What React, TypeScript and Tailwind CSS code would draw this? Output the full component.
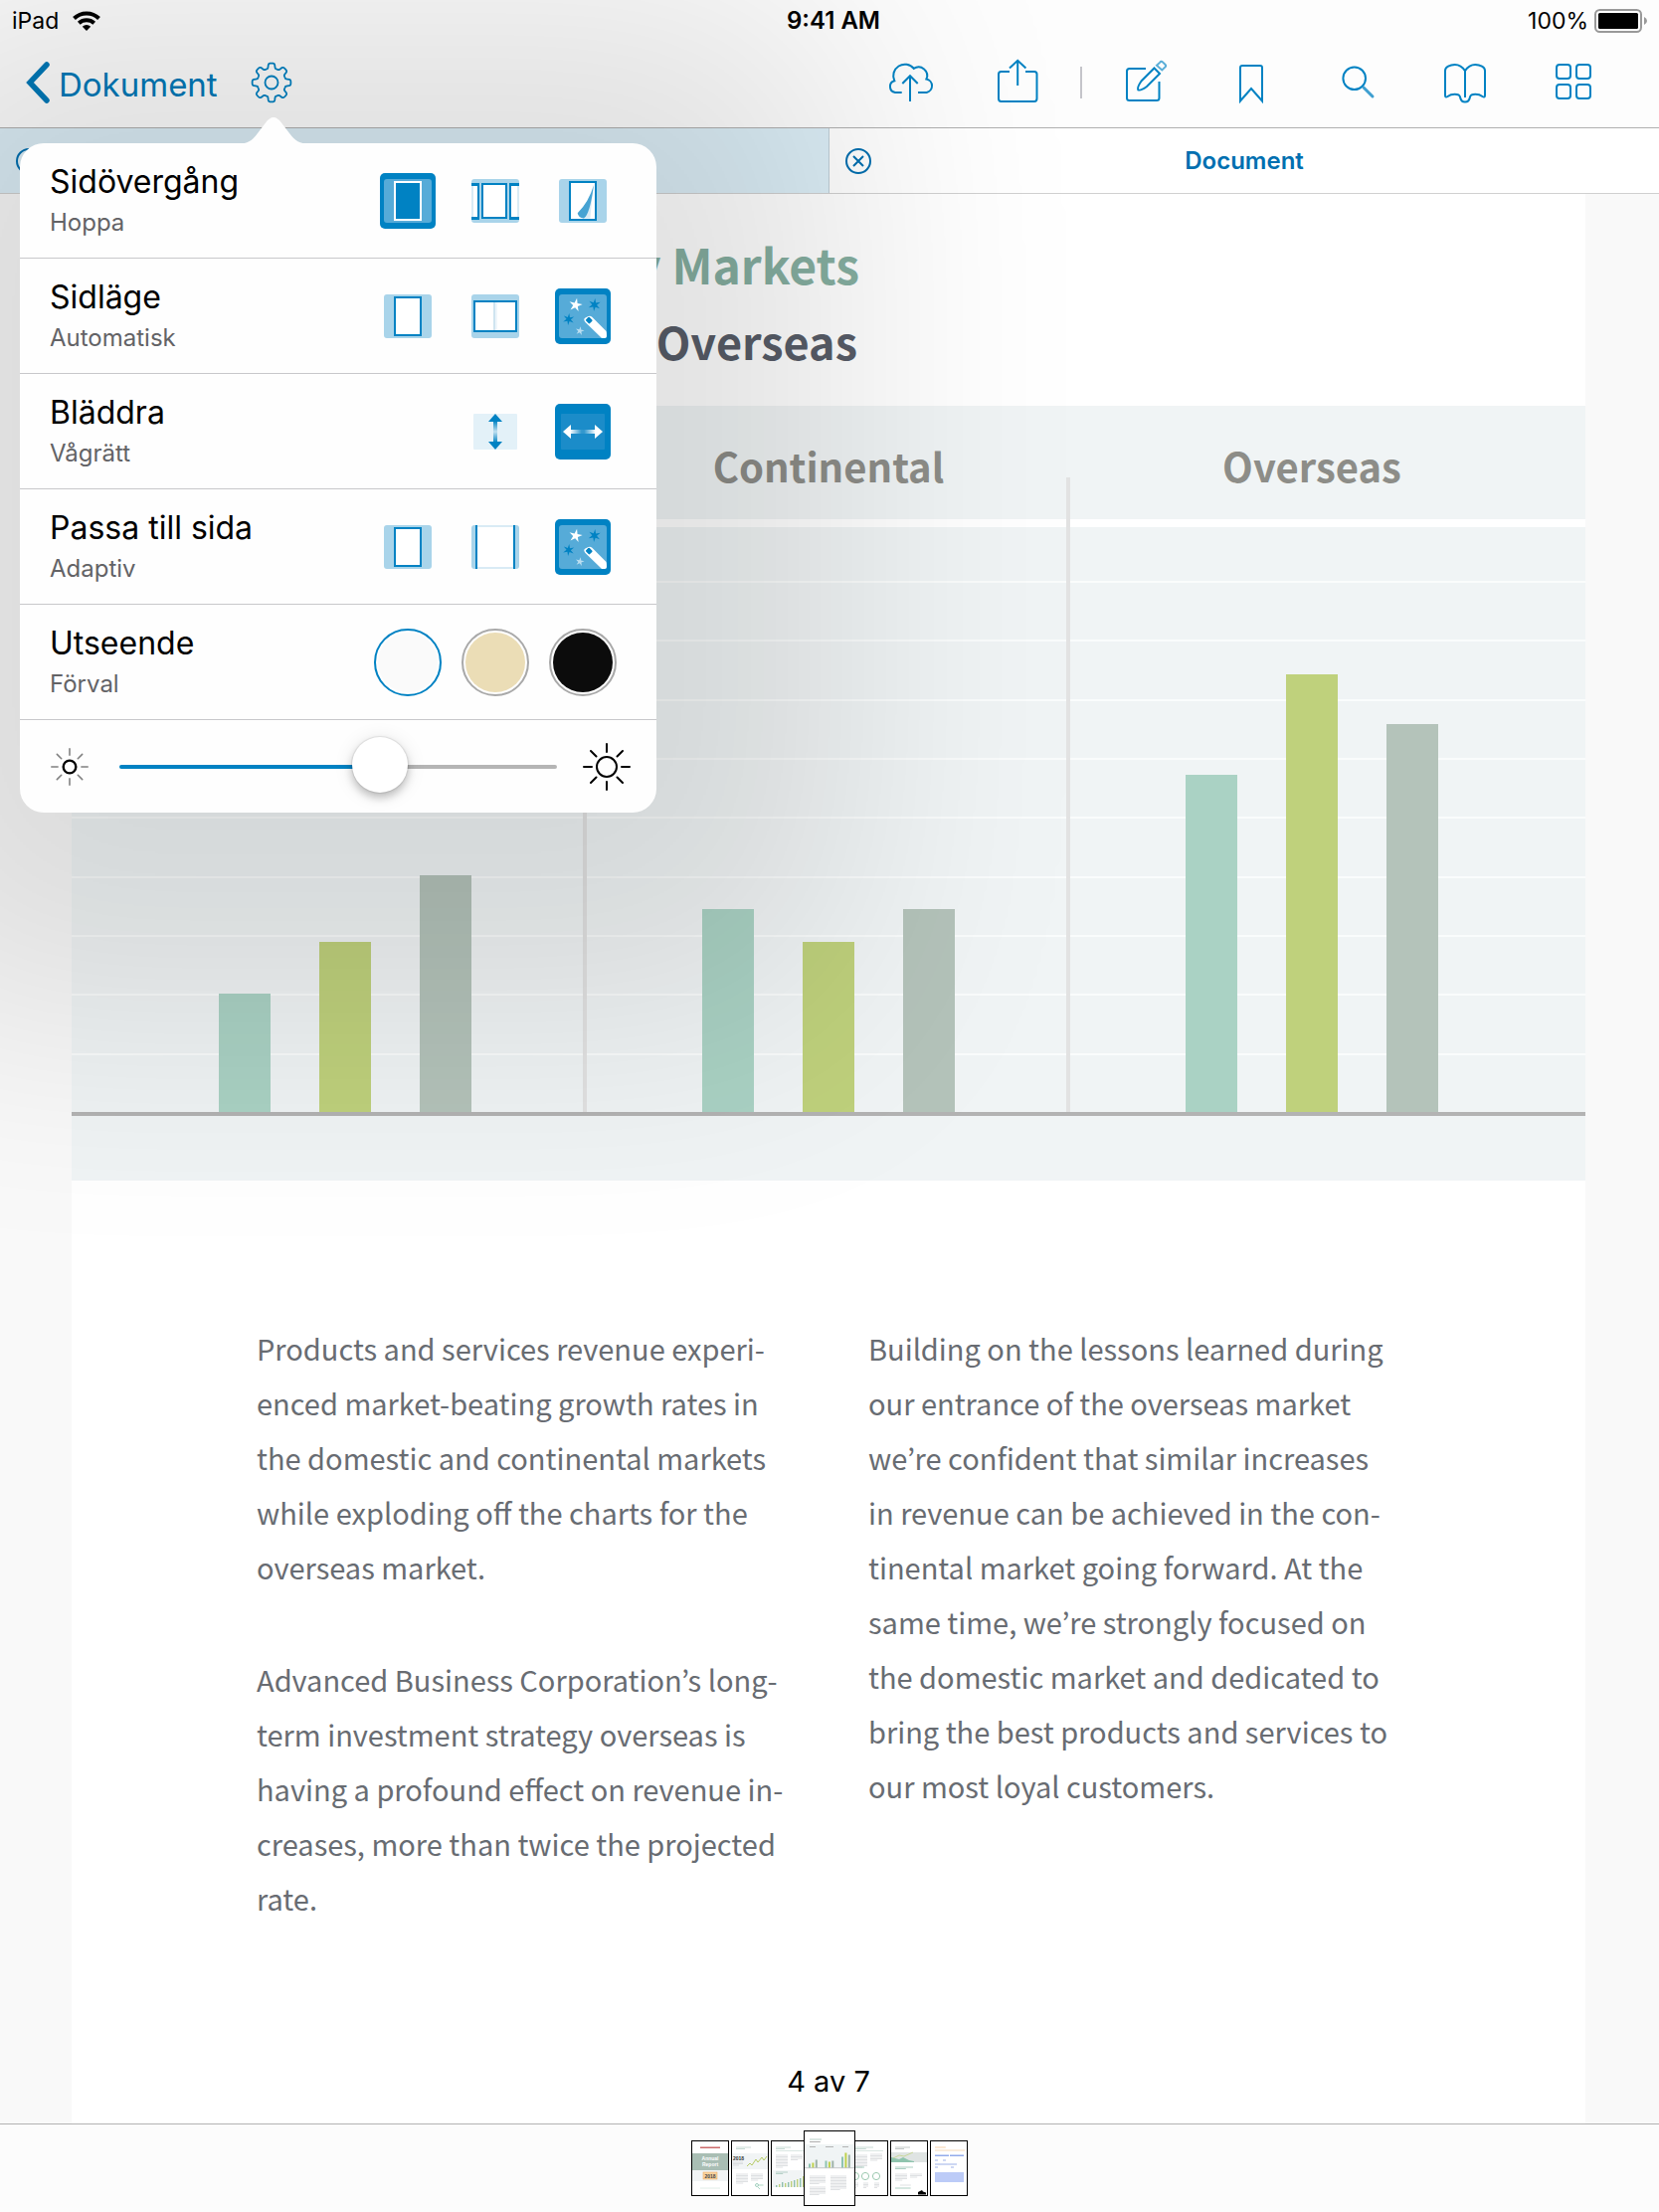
import type { ReactNode } from "react";

const BLUE = "#0082c3";

const gearPath = (() => {
  const points: string[] = [];
  for (let i = 0; i < 240; i++) {
    const t = (i / 240) * Math.PI * 2;
    const r = 16.9 + 2.5 * Math.tanh(2.6 * Math.cos(8 * t) + 0.1);
    points.push(`${(24 + r * Math.sin(t)).toFixed(2)} ${(24 - r * Math.cos(t)).toFixed(2)}`);
  }
  return `M${points.join("L")}Z`;
})();

const starPath = (cx: number, cy: number, r: number, spikes: number, turn: number) => {
  const pts: string[] = [];
  for (let i = 0; i < spikes * 2; i++) {
    const a = (i / (spikes * 2)) * Math.PI * 2 + turn;
    const q = i % 2 ? r * 0.36 : r;
    pts.push(`${(cx + q * Math.sin(a)).toFixed(2)} ${(cy - q * Math.cos(a)).toFixed(2)}`);
  }
  return `M${pts.join("L")}Z`;
};

function LineIcon({ children }: { children: ReactNode }) {
  return (
    <svg viewBox="0 0 48 48" className="size-12" fill="none" stroke={BLUE} strokeWidth="2" aria-hidden="true">
      {children}
    </svg>
  );
}

const toolbarStart = [
  {
    label: "Ladda upp",
    icon: (
      <>
        <path d="M14.7 34H8A6 6 0 0 1 7.3 22.3A11.6 11.6 0 0 1 26.7 9.9A8.6 8.6 0 0 1 39.4 20.5A6.9 6.9 0 0 1 39.7 34H31" />
        <path d="M23 43V17M15.3 25L23 17.2L30.7 25" />
      </>
    ),
  },
  {
    label: "Dela",
    icon: (
      <>
        <path d="M15 13H6.5Q4 13 4 15.5V40Q4 43 6.5 43H40Q42.5 43 42.5 40V15.5Q42.5 13 40 13H31" />
        <path d="M23.2 27V2M15 9.5L23.2 1.8L31.4 9.5" />
      </>
    ),
  },
];

const toolbarEnd = [
  {
    label: "Redigera",
    icon: (
      <>
        <path d="M26 10H9.5Q7 10 7 12.5V39.500Q7 42 9.500 42H37Q39.500 42 39.500 39.500V23" />
        <path d="M34.500 9.500L40 15L27 28Q21 32.500 18.300 31.400Q17 29 21.500 22.500Z" />
        <path d="M40.300 3.600Q41.500 2 43 3.400L45.600 6Q46.700 7.200 45.500 8.400L42.300 11.500L37 6.800Z" stroke="#5aaed8" />
      </>
    ),
  },
  {
    label: "Bokmärke",
    icon: <path d="M13 42.500V9Q13 7 15 7H33Q35 7 35 9V42.500L24 30Z" />,
  },
  {
    label: "Sök",
    icon: (
      <>
        <circle cx="19.700" cy="19.700" r="11.300" />
        <path d="M29 29L38 38" stroke="#3f9fd0" strokeWidth="3" strokeLinecap="round" />
      </>
    ),
  },
  {
    label: "Läsläge",
    icon: (
      <path d="M23 39V12.300C20 7.500 16 6 12.700 6C8 6 3 8.500 3 12V37C3 39 4.300 38.800 5.500 38C7.500 36.500 10 35.800 12.700 35.800C15.500 35.800 17.500 36.500 18 38.500C18.500 41.500 20 43.500 23 43.500C26 43.500 27.500 41.500 28 38.500C28.500 36.500 30.500 35.800 33.300 35.800C36 35.800 38.500 36.500 40.500 38C41.700 38.800 43 39 43 37V12C43 8.500 38 6 33.300 6C30 6 26 7.500 23 12.300" />
    ),
  },
  {
    label: "Miniatyrer",
    icon: (
      <>
        <rect x="7" y="6" width="14" height="14" rx="3" />
        <rect x="27" y="6" width="14" height="14" rx="3" />
        <rect x="7" y="26" width="14" height="14" rx="3" />
        <rect x="27" y="26" width="14" height="14" rx="3" />
      </>
    ),
  },
];

function ToolButton({ label, icon }: { label: string; icon: ReactNode }) {
  return (
    <button type="button" aria-label={label} className="flex w-[108px] justify-center">
      <LineIcon>{icon}</LineIcon>
    </button>
  );
}

function StatusBar() {
  return (
    <div className="grid h-10 grid-cols-3 items-end px-3 pb-[5px] text-[23px] leading-7 text-black">
      <div className="flex items-center gap-[14px]">
        <span>iPad</span>
        <svg viewBox="0 0 28 20" className="h-5 w-7" fill="none" stroke="#000" strokeWidth="4" aria-hidden="true">
          <path d="M1.500 7.500A18 18 0 0 1 26.500 7.500" />
          <path d="M6.300 12.300A11.500 11.500 0 0 1 21.700 12.300" />
          <path d="M9.800 15.800A6 6 0 0 1 18.200 15.800L14 20Z" fill="#000" stroke="none" />
        </svg>
      </div>
      <div className="pl-2 text-center text-[24px] font-semibold">9:41 AM</div>
      <div className="flex items-center justify-end gap-[6px]">
        <span>100%</span>
        <svg viewBox="0 0 53 24" className="h-6 w-[53px]" aria-hidden="true">
          <rect x="1" y="1" width="46" height="22" rx="4.500" fill="#fff" stroke="#999" strokeWidth="2" />
          <rect x="4" y="4" width="40" height="16" rx="1.500" fill="#000" />
          <path d="M50 8Q53 9.500 53 12T50 16Z" fill="#999" />
        </svg>
      </div>
    </div>
  );
}

function NavBar() {
  return (
    <div className="flex h-[88px] items-center pb-[2px] pr-8">
      <button type="button" className="flex items-center gap-2 pl-[25px] text-[33px] leading-10 text-[#0079b8]">
        <svg viewBox="0 0 26 44" className="h-11 w-[26px]" fill="none" stroke="#0079b8" strokeWidth="5.500" strokeLinecap="round" strokeLinejoin="miter" aria-hidden="true">
          <path d="M22 4L5 22L22 40" />
        </svg>
        <span className="pt-[3px]">Dokument</span>
      </button>
      <button type="button" aria-label="Inställningar" className="ml-[30px]">
        <svg viewBox="0 0 48 48" className="size-12" fill="none" stroke={BLUE} strokeWidth="1.800" aria-hidden="true">
          <path d={gearPath} />
          <circle cx="24" cy="24" r="6.500" />
        </svg>
      </button>
      <div className="ml-auto flex items-center">
        {toolbarStart.map((t) => (
          <ToolButton key={t.label} {...t} />
        ))}
        <div className="flex w-[18px] justify-center">
          <div className="h-8 w-[2px] bg-[#c4c4ca]" />
        </div>
        {toolbarEnd.map((t) => (
          <ToolButton key={t.label} {...t} />
        ))}
      </div>
    </div>
  );
}

function CloseButton() {
  return (
    <button type="button" aria-label="Stäng flik" className="shrink-0">
      <svg viewBox="0 0 26 26" className="size-[26px]" fill="none" stroke="#006fb0" strokeWidth="2" aria-hidden="true">
        <circle cx="13" cy="13" r="12" />
        <path d="M8 8L18 18M18 8L8 18" />
      </svg>
    </button>
  );
}

function Tabs() {
  return (
    <div className="grid h-[66px] grid-cols-2 border-b border-[#d0d0d0]">
      <div className="flex items-center border-r border-[#c0ced6] bg-[#dceef7] px-4">
        <CloseButton />
      </div>
      <div className="flex items-center bg-white px-4">
        <CloseButton />
        <button type="button" className="flex-1 pr-[26px] text-center text-[24px] font-semibold leading-8 text-[#006fb0]">
          Document
        </button>
      </div>
    </div>
  );
}

const groups = [
  { name: "Domestic", bars: [119, 171, 238] },
  { name: "Continental", bars: [204, 171, 204] },
  { name: "Overseas", bars: [339, 440, 390] },
];

const barColors = ["bg-[#aad2c4]", "bg-[#bfd17c]", "bg-[#b4c3ba]"];

function Chart() {
  return (
    <div className="bg-[#f0f4f5] pb-[65px]">
      <div className="grid border-b-4 border-[#b3b3b3]">
        <div className="col-start-1 row-start-1 flex flex-col pt-[114px]">
          <div className="h-2 bg-white" />
          <div className="flex h-[588px] flex-col">
            <div className="h-14 border-b-2 border-[#fafcfc]" />
            {Array.from({ length: 8 }, (_, i) => (
              <div key={i} className="flex-1 border-b-2 border-[#fafcfc]" />
            ))}
            <div className="flex-1" />
          </div>
        </div>
        <div className="z-0 col-start-1 row-start-1 grid grid-cols-3 px-8">
          {groups.map((g, gi) => (
            <div key={g.name} className="relative flex flex-col">
              <h3 className="pt-[34px] text-center text-[40px] font-semibold leading-[52px] text-[#8d8d88]">{g.name}</h3>
              <div className="flex flex-1 items-end justify-center gap-[49px]">
                {g.bars.map((h, i) => (
                  <div key={i} className={`w-[52px] ${barColors[i]}`} style={{ height: h }} />
                ))}
              </div>
              {gi < 2 && <div className="absolute bottom-0 right-0 h-[638px] w-1 bg-[#e2e2e2]" />}
            </div>
          ))}
        </div>
      </div>
    </div>
  );
}

const leftText = [
  [
    "Products and services revenue experi-",
    "enced market-beating growth rates in",
    "the domestic and continental markets",
    "while exploding off the charts for the",
    "overseas market.",
  ],
  [
    "Advanced Business Corporation’s long-",
    "term investment strategy overseas is",
    "having a profound effect on revenue in-",
    "creases, more than twice the projected",
    "rate.",
  ],
];

const rightText = [
  [
    "Building on the lessons learned during",
    "our entrance of the overseas market",
    "we’re confident that similar increases",
    "in revenue can be achieved in the con-",
    "tinental market going forward. At the",
    "same time, we’re strongly focused on",
    "the domestic market and dedicated to",
    "bring the best products and services to",
    "our most loyal customers.",
  ],
];

function Column({ paragraphs }: { paragraphs: string[][] }) {
  return (
    <div className="flex flex-col gap-[58px]">
      {paragraphs.map((lines) => (
        <p key={lines[0]} className="whitespace-nowrap">
          {lines.map((l) => (
            <span key={l} className="block">
              {l}
            </span>
          ))}
        </p>
      ))}
    </div>
  );
}

function DocumentPage() {
  return (
    <main className="flex flex-1 flex-col bg-[#f9f9f9] pl-[72px] pr-[74px]">
      <article lang="en" className="flex flex-1 flex-col bg-white font-['Noto_Sans_CJK_KR','Noto_Sans',sans-serif]">
        <header className="flex h-[213px] w-[792px] flex-col pt-[31px] text-right font-semibold">
          <h1 className="text-[48px] leading-[78px] text-[#86afa1]">Key Markets</h1>
          <h2 className="pr-[2px] text-[45px] leading-[78px] text-[#585d68]">Overseas</h2>
        </header>
        <Chart />
        <div className="grid grid-cols-2 gap-20 px-[186px] pt-[141px] text-[29px] leading-[55px] text-[#686c72]">
          <Column paragraphs={leftText} />
          <Column paragraphs={rightText} />
        </div>
        <div className="mt-auto pb-[22px] text-center font-[Inter,sans-serif] text-[29px] leading-10 text-black">4 av 7</div>
      </article>
    </main>
  );
}

function TextLines({ x, y, w, n, color = "#c9cdd0" }: { x: number; y: number; w: number; n: number; color?: string }) {
  return (
    <g stroke={color} strokeWidth="0.600">
      {Array.from({ length: n }, (_, i) => (
        <path key={i} d={`M${x} ${y + i * 1.5}h${i === n - 1 ? w * 0.6 : w}`} />
      ))}
    </g>
  );
}

const thumbs: ReactNode[] = [
  <>
    <rect x="8" y="5.500" width="20" height="1.500" fill="#cc6b6b" />
    <rect y="12" width="36" height="17" fill="#a9beb4" />
    <rect y="29" width="36" height="11" fill="#f1f4f5" />
    <text x="18" y="19" fontSize="5" fontWeight="700" textAnchor="middle" fill="#fff">Annual</text>
    <text x="18" y="25" fontSize="5" fontWeight="700" textAnchor="middle" fill="#fff">Report</text>
    <rect x="11" y="31" width="14" height="7" fill="#f9d3a0" stroke="#efa550" strokeWidth="0.500" />
    <text x="18" y="36.500" fontSize="5" fontWeight="700" textAnchor="middle" fill="#444">2018</text>
    <path d="M8 47h20" stroke="#dbe7e2" strokeWidth="0.800" />
  </>,
  <>
    <TextLines x={4} y={6} w={15} n={2} color="#a5c3b8" />
    <rect y="12" width="36" height="16" fill="#f1f4f5" />
    <text x="1" y="19" fontSize="5" fontWeight="700" fill="#333">2018</text>
    <TextLines x={1} y={21} w={10} n={3} />
    <path d="M15 25l3-3 2 2 4-6 2 3 4-5 2 3 3-4" fill="none" stroke="#b7cc66" strokeWidth="1" />
    <TextLines x={4} y={33} w={12} n={7} />
    <TextLines x={19} y={33} w={12} n={5} />
    <circle cx="25" cy="44" r="1.500" fill="none" stroke="#8cc5ae" strokeWidth="0.800" />
    <path d="M26.500 44h5M26 46l2 2" stroke="#8cc5ae" strokeWidth="0.700" />
  </>,
  <>
    <TextLines x={4} y={6} w={15} n={2} color="#a5c3b8" />
    <path d="M4 9.500h32" stroke="#b5cfc5" strokeWidth="0.500" />
    <TextLines x={4} y={14} w={12} n={9} />
    <TextLines x={19} y={14} w={12} n={4} />
    <rect y="29" width="36" height="17" fill="#f1f4f5" />
    <TextLines x={4} y={31} w={12} n={2} color="#8fb5a7" />
    {[2, 3, 5, 4, 5, 6, 7, 8, 9, 11, 12].map((h, i) => (
      <rect key={i} x={4 + i * 3} y={46 - h} width="1.400" height={h} fill={i % 2 ? "#bfd17c" : "#8fbfae"} />
    ))}
  </>,
  <>
    <TextLines x={5} y={8} w={20} n={1} color="#86afa1" />
    <TextLines x={5} y={10.5} w={18} n={1} color="#777" />
    <rect y="13" width="50" height="24" fill="#f0f4f5" />
    <path d="M5 15.500h6M21 15.500h8M38 15.500h6" stroke="#888" strokeWidth="0.600" />
    {[4, 5, 8, 7, 6, 7, 11, 15, 13].map((h, i) => (
      <rect key={i} x={4 + (i % 3) * 3.4 + Math.floor(i / 3) * 16.5} y={36.5 - h} width="2" height={h} fill={["#8fc4b2", "#bfd14c", "#9fb3a9"][i % 3]} />
    ))}
    <path d="M0 36.700h50" stroke="#aaa" strokeWidth="0.600" />
    <TextLines x={5} y={45} w={16} n={6} />
    <TextLines x={5} y={56} w={16} n={6} />
    <TextLines x={26} y={45} w={16} n={10} />
  </>,
  <>
    <TextLines x={4} y={6} w={18} n={2} color="#a5c3b8" />
    <path d="M0 9.500h32" stroke="#b5cfc5" strokeWidth="0.500" />
    <TextLines x={4} y={14} w={12} n={9} />
    <TextLines x={19} y={13} w={12} n={5} />
    <TextLines x={4} y={26} w={15} n={1} color="#77b09c" />
    {[4, 14, 25].map((x) => (
      <circle key={x} cx={x} cy="35" r="3.600" fill="none" stroke="#9cc9b0" strokeWidth="1" />
    ))}
    <TextLines x={2} y={42} w={5} n={4} />
    <TextLines x={12} y={42} w={5} n={4} />
    <TextLines x={23} y={42} w={5} n={4} />
  </>,
  <>
    <TextLines x={4} y={6} w={15} n={2} color="#9aa5a1" />
    <rect y="11" width="36" height="10" fill="#dfe4e3" />
    <path d="M0 21v-5l8 2 4-2 6 3 5 1v1z" fill="#8fc4ae" />
    <path d="M2 17l6-3 5 1 9-4" stroke="#b7cc66" strokeWidth="0.600" fill="none" />
    <TextLines x={4} y={26} w={18} n={2} color="#77b09c" />
    <TextLines x={4} y={33} w={12} n={5} />
    <TextLines x={19} y={33} w={12} n={3} />
    <TextLines x={9} y={44} w={18} n={1} />
    <TextLines x={4} y={47} w={26} n={1} color="#77b09c" />
    <path d="M27 51l4-2 1 1.500 3 1v2h-8z" fill="#000" />
  </>,
  <>
    <TextLines x={4} y={6} w={18} n={1} color="#f0b26b" />
    <path d="M4 9h30" stroke="#efbf86" strokeWidth="0.600" />
    <rect x="4" y="13.500" width="14" height="1.500" fill="#93abeb" />
    <rect x="19" y="13.500" width="14" height="1.500" fill="#93abeb" />
    <path d="M4 19h3M12 19h3M4 23h22M4 26h3M20 26h3" stroke="#9db1e8" strokeWidth="1" />
    <rect x="4" y="31" width="29" height="10" fill="#bccbf7" />
  </>,
];

function ThumbnailBar() {
  return (
    <footer className="flex h-[89px] items-center justify-center gap-[2px] border-t border-[#b2b2b2] bg-[#fcfcfc]">
      {thumbs.map((art, i) =>
        i === 3 ? (
          <button key={i} type="button" aria-label={`Sida ${i + 1}`} aria-current="page" className="z-10 mx-[-7px] h-[76px] w-[52px] border border-black bg-white">
            <svg viewBox="0 0 50 74" className="h-full w-full">{art}</svg>
          </button>
        ) : (
          <button key={i} type="button" aria-label={`Sida ${i + 1}`} className="h-14 w-[38px] border border-black bg-white">
            <svg viewBox="0 0 36 54" className="h-full w-full font-['Liberation_Sans',sans-serif]">{art}</svg>
          </button>
        )
      )}
    </footer>
  );
}

const Plain = () => <rect x="4" y="6" width="48" height="44" rx="3" fill="#a9d4ea" />;

const Selected = () => (
  <>
    <rect width="56" height="56" rx="5" fill={BLUE} />
    <rect x="4" y="6" width="48" height="44" rx="3" fill="#56abd8" />
  </>
);

const singlePage = (
  <>
    <Plain />
    <rect x="15" y="9" width="26" height="38" fill="#fff" stroke={BLUE} strokeWidth="2" />
  </>
);

const wand = (
  <>
    <Selected />
    <path d={starPath(20.7, 16.7, 7, 5, 0.2)} fill="#fff" />
    <path d={starPath(39.7, 16.5, 6.5, 6, 0.1)} fill={BLUE} />
    <path d={starPath(13.7, 31, 6, 6, 0.1)} fill={BLUE} />
    <path d={starPath(25, 42.7, 4.6, 5, 0.2)} fill="#bcdef0" />
    <path d="M32.500 28.500Q35 26.700 37.300 28.800L51.500 43Q52 44 52 48Q52 50 50 50H47L30.500 34Q28 31 30.500 29.500Z" fill="#fff" />
    <rect x="31.500" y="29.500" width="5.500" height="5" rx="1" transform="rotate(45 34.200 32)" fill={BLUE} />
  </>
);

type Option = { label: string; art: ReactNode; on?: boolean };
type Row = { title: string; value: string; options: Option[] };

const rows: Row[] = [
  {
    title: "Sidövergång",
    value: "Hoppa",
    options: [
      {
        label: "Hoppa",
        on: true,
        art: (
          <>
            <Selected />
            <rect x="15" y="9" width="26" height="38" fill={BLUE} stroke="#fff" strokeWidth="2" />
          </>
        ),
      },
      {
        label: "Rulla",
        art: (
          <>
            <Plain />
            <path d="M4 10h8v37H4zM42 10h10v37H42z" fill={BLUE} />
            <path d="M4 13h6v31H4zM44 13h8v31H44z" fill="#fff" />
            <path d="M4 13h2v31H4zM50 13h2v31H50z" fill="#d9ebf5" />
            <rect x="15" y="11" width="24" height="34" fill="#fff" stroke={BLUE} strokeWidth="2" />
          </>
        ),
      },
      {
        label: "Bläddra sida",
        art: (
          <>
            {singlePage}
            <path d="M39 12Q36 36 35.500 45.500H28L33 38Z" fill="#d9ebf5" />
            <path d="M39 12Q34 29 22.700 40.300Q23.500 45 29 45.500Q35 42 39 12Z" fill="#46a3d3" />
          </>
        ),
      },
    ],
  },
  {
    title: "Sidläge",
    value: "Automatisk",
    options: [
      { label: "Enkel", art: singlePage },
      {
        label: "Dubbel",
        art: (
          <>
            <Plain />
            <rect x="7" y="13" width="42" height="30" fill="#fff" stroke={BLUE} strokeWidth="2" />
            <path d="M26 14h2v28h-2z" fill="#cfe4f0" />
            <path d="M28 14h2v28h-2z" fill="#eff6fb" />
          </>
        ),
      },
      { label: "Automatisk", on: true, art: wand },
    ],
  },
  {
    title: "Bläddra",
    value: "Vågrätt",
    options: [
      {
        label: "Lodrätt",
        art: (
          <>
            <linearGradient id="vfade" x1="0" y1="0" x2="0" y2="1">
              <stop offset="0" stopColor={BLUE} />
              <stop offset="0.5" stopColor={BLUE} stopOpacity="0.15" />
              <stop offset="1" stopColor={BLUE} />
            </linearGradient>
            <rect x="6" y="10" width="44" height="36" rx="1" fill="#e3f1f8" />
            <rect x="26" y="17" width="4" height="22" fill="url(#vfade)" />
            <path d="M28 10l7 8H21zM28 46l7-8H21z" fill={BLUE} />
          </>
        ),
      },
      {
        label: "Vågrätt",
        on: true,
        art: (
          <>
            <linearGradient id="hfade" x1="0" y1="0" x2="1" y2="0">
              <stop offset="0" stopColor="#fff" />
              <stop offset="0.45" stopColor="#fff" stopOpacity="0.1" />
              <stop offset="0.55" stopColor="#fff" stopOpacity="0.1" />
              <stop offset="1" stopColor="#fff" />
            </linearGradient>
            <rect width="56" height="56" rx="5" fill={BLUE} />
            <rect x="6" y="10" width="44" height="36" rx="1" fill="#1b8cc9" />
            <rect x="15" y="26" width="26" height="4" fill="url(#hfade)" />
            <path d="M8 28l8-7v14zM48 28l-8-7v14z" fill="#fff" />
          </>
        ),
      },
    ],
  },
  {
    title: "Passa till sida",
    value: "Adaptiv",
    options: [
      { label: "Hela sidan", art: singlePage },
      {
        label: "Bredd",
        art: (
          <>
            <Plain />
            <path d="M8 6h40v44H8z" fill="#d9ebf5" />
            <path d="M8 8h40v40H8z" fill="#fff" />
            <path d="M8 6h2v44H8zM46 6h2v44h-2z" fill={BLUE} />
          </>
        ),
      },
      { label: "Adaptiv", on: true, art: wand },
    ],
  },
];

const themes = [
  { label: "Förval", ring: "border-[#0082c3]", fill: "bg-[#fafafa]" },
  { label: "Sepia", ring: "border-[#a9a9a9]", fill: "bg-[#ebddb6]" },
  { label: "Natt", ring: "border-[#a9a9a9]", fill: "bg-[#0c0c0c]" },
];

function RowLabel({ title, value }: { title: string; value: string }) {
  return (
    <div className="flex flex-1 flex-col pt-[2px]">
      <span className="text-[32px] leading-[42px] text-black">{title}</span>
      <span className="text-[24px] leading-10 text-[#636366]">{value}</span>
    </div>
  );
}

function Sun({ rays, size, small }: { rays: string; size: string; small?: boolean }) {
  return (
    <svg viewBox="0 0 48 48" className={`${size} shrink-0`} fill="none" aria-hidden="true">
      <circle cx="24" cy="24" r={small ? 8 : 10} stroke="#000" strokeWidth={small ? 3 : 2} />
      <path
        d="M24 1v8M24 39v8M1 24h8M39 24h8M8 8l5.500 5.500M34.500 34.500l5.500 5.500M40 8l-5.500 5.500M13.500 34.500L8 40"
        stroke={rays}
        strokeWidth="2"
        strokeLinecap="round"
      />
    </svg>
  );
}

function SettingsPopover() {
  return (
    <section
      aria-label="Inställningar"
      className="absolute left-5 top-36 z-20 w-[640px] rounded-[24px] bg-[#fefefe] shadow-[10px_24px_280px_176px_rgba(0,0,0,0.118)]"
    >
      <svg viewBox="0 0 72 27" className="absolute -top-[26px] left-[219px] h-[27px] w-[72px]" aria-hidden="true">
        <path d="M0 27C10 26 14 24 20 16L28 5.500Q36 -5.500 44 5.500L52 16C58 24 62 26 72 27Z" fill="#fefefe" />
      </svg>
      {rows.map((row) => (
        <div key={row.title} className="flex h-[116px] items-center border-b border-[#c8c8cb] pl-[30px] pr-[46px]">
          <RowLabel title={row.title} value={row.value} />
          <div className="flex gap-8">
            {row.options.map((o) => (
              <button key={o.label} type="button" aria-label={o.label} aria-pressed={!!o.on}>
                <svg viewBox="0 0 56 56" className="size-14">{o.art}</svg>
              </button>
            ))}
          </div>
        </div>
      ))}
      <div className="flex h-[116px] items-center border-b border-[#c8c8cb] pl-[30px] pr-10">
        <RowLabel title="Utseende" value="Förval" />
        <div className="flex gap-5">
          {themes.map((t) => (
            <button key={t.label} type="button" aria-label={t.label} className={`size-[68px] rounded-full border-2 p-[2px] ${t.ring}`}>
              <span className={`block size-full rounded-full ${t.fill}`} />
            </button>
          ))}
        </div>
      </div>
      <div className="flex h-[93px] items-center pl-[31px] pr-[26px]">
        <Sun size="size-[38px]" rays="#808080" small />
        <input
          type="range"
          aria-label="Ljusstyrka"
          min={0}
          max={100}
          defaultValue={61}
          className="ml-[31px] mr-[26px] h-14 min-w-0 flex-1 appearance-none bg-transparent [&::-webkit-slider-runnable-track]:h-1 [&::-webkit-slider-runnable-track]:rounded-full [&::-webkit-slider-runnable-track]:bg-[linear-gradient(90deg,#0082c3_60%,#b5b5b5_60%)] [&::-webkit-slider-thumb]:-mt-7 [&::-webkit-slider-thumb]:size-14 [&::-webkit-slider-thumb]:appearance-none [&::-webkit-slider-thumb]:rounded-full [&::-webkit-slider-thumb]:bg-white [&::-webkit-slider-thumb]:shadow-[0_0_1px_1px_rgba(0,0,0,0.08),0_5px_8px_rgba(0,0,0,0.22),0_2px_20px_rgba(0,0,0,0.1)]"
        />
        <Sun size="size-12" rays="#000" />
      </div>
    </section>
  );
}

export default function App() {
  return (
    <div className="relative flex min-h-screen flex-col overflow-hidden font-[Inter,sans-serif]">
      <div className="border-b border-[#b0b0b0] bg-[#fdfdfd]">
        <StatusBar />
        <NavBar />
      </div>
      <Tabs />
      <DocumentPage />
      <ThumbnailBar />
      <SettingsPopover />
    </div>
  );
}
